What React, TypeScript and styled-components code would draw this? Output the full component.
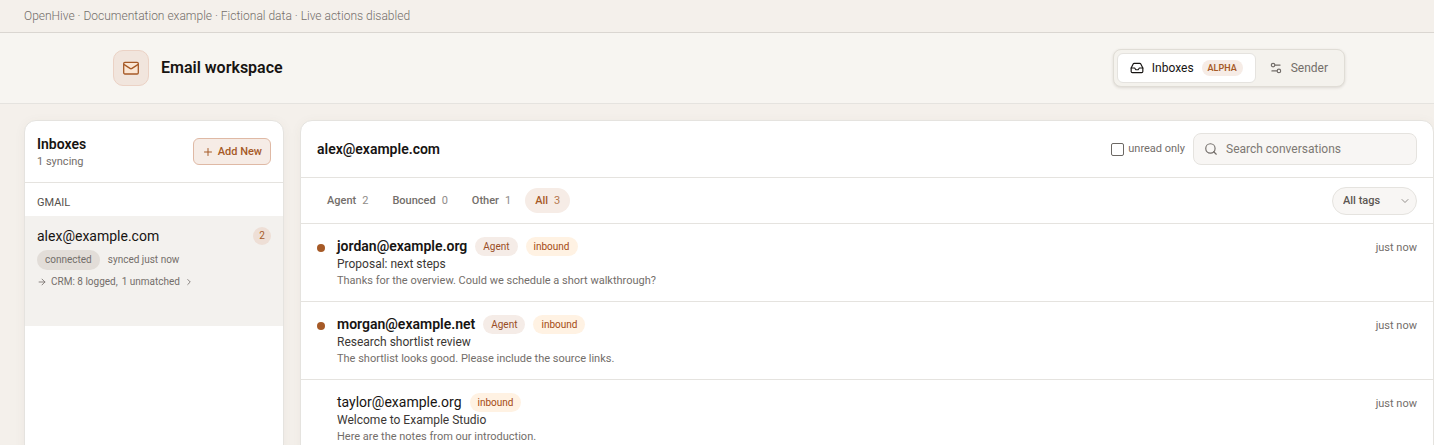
import React from "react";
import styled, { createGlobalStyle, css } from "styled-components";
import { ArrowRight, ChevronDown, ChevronRight, Inbox, Plus, Search, Settings2 } from "lucide-react";

const ink = "#171412";
const muted = "#736e6a";
const accent = "#a65a27";
const line = "#e5e3df";

const GlobalStyle = createGlobalStyle`
  *, *::before, *::after { box-sizing: border-box; }
  body {
    margin: 0;
    background: #f4f0eb;
    color: ${ink};
    font-family: Roboto, "Liberation Sans", sans-serif;
    font-size: 12px;
    line-height: 16px;
    -webkit-font-smoothing: antialiased;
  }
  h1, h2, h3, p, ul { margin: 0; padding: 0; }
  ul { list-style: none; }
  button, input, select { font: inherit; color: inherit; margin: 0; }
  button { cursor: pointer; }
`;

const Page = styled.div`
  height: 100vh;
  overflow: hidden;
`;

const Notice = styled.p`
  padding: 8px 24px;
  border-bottom: 1px solid #dad6d1;
  color: ${muted};
  font-weight: 300;
`;

const Header = styled.header`
  padding: 16px 0 16px 24px;
  background: #f7f5f1;
  border-bottom: 1px solid ${line};
`;

const HeaderInner = styled.div`
  display: flex;
  align-items: center;
  justify-content: space-between;
  max-width: 1232px;
  margin: 0 auto;
`;

const Brand = styled.div`
  display: flex;
  align-items: center;
  gap: 12px;
`;

const BrandIcon = styled.span`
  display: grid;
  place-items: center;
  width: 36px;
  height: 36px;
  border: 1px solid #ebd2c5;
  border-radius: 10px;
  background: #f1e5dd;
  color: ${accent};
`;

const Title = styled.h1`
  font-size: 16px;
  line-height: 24px;
  font-weight: 600;
`;

const Switcher = styled.nav`
  display: flex;
  padding: 3px;
  border: 1px solid #e0ddd6;
  border-radius: 8px;
  background: #f4f2ed;
  box-shadow: 0 1px 3px rgba(60, 45, 30, 0.14);
`;

const SwitchButton = styled.button<{ $active?: boolean }>`
  display: flex;
  align-items: center;
  gap: 8px;
  height: 30px;
  padding: 0 12px;
  border: 1px solid transparent;
  border-radius: 6px;
  background: transparent;
  color: ${muted};
  ${({ $active }) =>
    $active &&
    css`
      border-color: ${line};
      background: #fff;
      color: ${ink};
    `}
`;

const AlphaTag = styled.span`
  padding: 0 6px;
  border-radius: 8px;
  background: #f6ece6;
  color: ${accent};
  font-size: 9px;
  line-height: 16px;
  font-weight: 600;
`;

const Workspace = styled.main`
  display: grid;
  grid-template-columns: 260px minmax(0, 1fr);
  gap: 16px;
  padding: 16px 0 16px 24px;
`;

const Card = styled.section`
  overflow: hidden;
  border: 1px solid ${line};
  border-radius: 12px;
  background: #fff;
  box-shadow: 0 2px 12px rgba(90, 70, 50, 0.05);
`;

const SideHeader = styled.div`
  display: flex;
  align-items: center;
  justify-content: space-between;
  height: 62px;
  padding: 0 12px;
  border-bottom: 1px solid ${line};
`;

const SideTitle = styled.h2`
  font-size: 14px;
  line-height: 20px;
  font-weight: 600;
`;

const Small = styled.p`
  font-size: 11px;
  color: ${muted};
`;

const AddButton = styled.button`
  display: flex;
  align-items: center;
  gap: 4px;
  height: 27px;
  padding: 0 8px;
  border: 1px solid #dfb9a5;
  border-radius: 6px;
  background: #f6ece6;
  color: ${accent};
  font-size: 11px;
  font-weight: 500;
`;

const GroupLabel = styled.h3`
  padding: 12px 12px 5px;
  color: #55504c;
  font-size: 11px;
  font-weight: 400;
`;

const Account = styled.article`
  display: flex;
  flex-direction: column;
  gap: 4px;
  min-height: 110px;
  padding: 10px 12px;
  background: #f3f1ee;
  color: ${muted};
  font-size: 10px;
`;

const AccountRow = styled.div`
  display: flex;
  align-items: center;
  gap: 8px;
  line-height: 20px;
`;

const AccountName = styled.span`
  flex: 1;
  color: ${ink};
  font-size: 14px;
`;

const CountBadge = styled.span`
  width: 18px;
  border-radius: 9px;
  background: #eedfd6;
  color: ${accent};
  line-height: 18px;
  text-align: center;
`;

const StatusPill = styled.span`
  padding: 0 8px;
  border-radius: 10px;
  background: #e2ddd8;
`;

const CrmLink = styled.a`
  display: flex;
  align-items: center;
  gap: 4px;
  color: inherit;
  text-decoration: none;
`;

const MainHeader = styled.div`
  display: flex;
  align-items: center;
  gap: 8px;
  height: 57px;
  padding: 0 16px;
  border-bottom: 1px solid ${line};
`;

const MainTitle = styled.h2`
  flex: 1;
  font-size: 14px;
  line-height: 20px;
  font-weight: 600;
`;

const UnreadLabel = styled.label`
  display: flex;
  align-items: center;
  gap: 4px;
  color: ${muted};
  font-size: 11px;
`;

const Checkbox = styled.input`
  appearance: none;
  width: 13px;
  height: 13px;
  border: 1px solid #6c6864;
  border-radius: 2px;
  background: #fff;
  &:checked { background: ${accent}; }
`;

const SearchBox = styled.label`
  display: flex;
  align-items: center;
  gap: 8px;
  width: 224px;
  height: 32px;
  padding: 0 10px;
  border: 1px solid ${line};
  border-radius: 8px;
  background: #f8f6f4;
  color: ${muted};
`;

const SearchInput = styled.input`
  flex: 1;
  min-width: 0;
  padding: 0;
  border: 0;
  outline: 0;
  background: transparent;
  &::placeholder { color: #7d7873; opacity: 1; }
`;

const FilterBar = styled.div`
  display: flex;
  align-items: center;
  justify-content: space-between;
  height: 46px;
  padding: 0 16px;
  border-bottom: 1px solid ${line};
`;

const Filters = styled.div`
  display: flex;
  gap: 4px;
`;

const FilterButton = styled.button<{ $active?: boolean }>`
  display: flex;
  align-items: center;
  gap: 6px;
  height: 25px;
  padding: 0 10px;
  border: 0;
  border-radius: 13px;
  background: ${({ $active }) => ($active ? "#f6ece6" : "transparent")};
  color: ${({ $active }) => ($active ? accent : muted)};
  font-size: 11px;
  font-weight: 500;
`;

const FilterCount = styled.span`
  font-weight: 400;
  opacity: 0.8;
`;

const SelectWrap = styled.div`
  display: grid;
  align-items: center;
  width: 85px;
  > * { grid-area: 1 / 1; }
  > svg { justify-self: end; margin-right: 6px; color: ${muted}; pointer-events: none; }
`;

const TagSelect = styled.select`
  appearance: none;
  width: 100%;
  height: 28px;
  padding: 0 10px;
  border: 1px solid ${line};
  border-radius: 14px;
  background: #f8f6f4;
  color: #5d5752;
  font-size: 11px;
  font-weight: 500;
`;

const Conversation = styled.li`
  display: flex;
  gap: 12px;
  height: 78px;
  padding: 12px 16px;
  border-bottom: 1px solid ${line};
`;

const Dot = styled.span<{ $unread?: boolean }>`
  width: 8px;
  height: 8px;
  margin-top: 8px;
  border-radius: 50%;
  background: ${({ $unread }) => ($unread ? accent : "transparent")};
`;

const Body = styled.div`
  flex: 1;
  min-width: 0;
`;

const SenderRow = styled.div`
  display: flex;
  align-items: center;
  gap: 8px;
`;

const SenderName = styled.h3<{ $unread?: boolean }>`
  font-size: 14px;
  line-height: 20px;
  font-weight: ${({ $unread }) => ($unread ? 600 : 400)};
`;

const Tag = styled.span<{ $tone: "agent" | "inbound" }>`
  padding: 0 8px;
  border-radius: 10px;
  background: ${({ $tone }) => ($tone === "agent" ? "#f5ece7" : "#fff2e3")};
  color: ${({ $tone }) => ($tone === "agent" ? "#994d25" : "#a44a12")};
  font-size: 10px;
  line-height: 19px;
`;

const Subject = styled.p`
  color: #3b3734;
`;

const Preview = styled(Small)`
  line-height: 17px;
`;

const Time = styled.time`
  margin-top: 4px;
  color: ${muted};
  font-size: 11px;
`;

const MailIcon = () => (
  <svg width="18" height="18" viewBox="0 0 18 18" fill="none" stroke="currentColor" strokeWidth="1.3" strokeLinecap="round" strokeLinejoin="round" aria-hidden="true">
    <rect x="1.7" y="3.4" width="14.6" height="11.6" rx="1.2" fill="#fbe6d4" />
    <path d="M2.2 5.6 8 9.4a1.8 1.8 0 0 0 2 0l5.8-3.8" />
  </svg>
);

const filters = [
  { name: "Agent", count: 2 },
  { name: "Bounced", count: 0 },
  { name: "Other", count: 1 },
  { name: "All", count: 3, active: true },
];

const conversations = [
  { sender: "jordan@example.org", unread: true, subject: "Proposal: next steps", preview: "Thanks for the overview. Could we schedule a short walkthrough?" },
  { sender: "morgan@example.net", unread: true, subject: "Research shortlist review", preview: "The shortlist looks good. Please include the source links." },
  { sender: "taylor@example.org", unread: false, subject: "Welcome to Example Studio", preview: "Here are the notes from our introduction." },
];

export default function App() {
  return (
    <>
      <GlobalStyle />
      <Page>
        <Notice>OpenHive · Documentation example · Fictional data · Live actions disabled</Notice>
        <Header>
          <HeaderInner>
            <Brand>
              <BrandIcon><MailIcon /></BrandIcon>
              <Title>Email workspace</Title>
            </Brand>
            <Switcher aria-label="Workspace view">
              <SwitchButton $active><Inbox size={14} />Inboxes<AlphaTag>ALPHA</AlphaTag></SwitchButton>
              <SwitchButton><Settings2 size={14} />Sender</SwitchButton>
            </Switcher>
          </HeaderInner>
        </Header>
        <Workspace>
          <Card>
            <SideHeader>
              <div>
                <SideTitle>Inboxes</SideTitle>
                <Small>1 syncing</Small>
              </div>
              <AddButton><Plus size={12} />Add New</AddButton>
            </SideHeader>
            <GroupLabel>GMAIL</GroupLabel>
            <Account>
              <AccountRow>
                <AccountName>alex@example.com</AccountName>
                <CountBadge>2</CountBadge>
              </AccountRow>
              <AccountRow><StatusPill>connected</StatusPill><span>synced just now</span></AccountRow>
              <CrmLink href="#crm">
                <ArrowRight size={10} />
                <span>CRM: 8 logged,</span>
                <span>1 unmatched</span>
                <ChevronRight size={10} />
              </CrmLink>
            </Account>
          </Card>
          <Card>
            <MainHeader>
              <MainTitle>alex@example.com</MainTitle>
              <UnreadLabel><Checkbox type="checkbox" />unread only</UnreadLabel>
              <SearchBox>
                <Search size={14} />
                <SearchInput type="search" aria-label="Search conversations" placeholder="Search conversations" />
              </SearchBox>
            </MainHeader>
            <FilterBar>
              <Filters>
                {filters.map((f) => (
                  <FilterButton key={f.name} $active={f.active}>
                    {f.name}<FilterCount>{f.count}</FilterCount>
                  </FilterButton>
                ))}
              </Filters>
              <SelectWrap>
                <TagSelect aria-label="Tags"><option>All tags</option></TagSelect>
                <ChevronDown size={12} strokeWidth={1.5} />
              </SelectWrap>
            </FilterBar>
            <ul>
              {conversations.map((c) => (
                <Conversation key={c.sender}>
                  <Dot $unread={c.unread} />
                  <Body>
                    <SenderRow>
                      <SenderName $unread={c.unread}>{c.sender}</SenderName>
                      {c.unread && <Tag $tone="agent">Agent</Tag>}
                      <Tag $tone="inbound">inbound</Tag>
                    </SenderRow>
                    <Subject>{c.subject}</Subject>
                    <Preview>{c.preview}</Preview>
                  </Body>
                  <Time>just now</Time>
                </Conversation>
              ))}
            </ul>
          </Card>
        </Workspace>
      </Page>
    </>
  );
}
